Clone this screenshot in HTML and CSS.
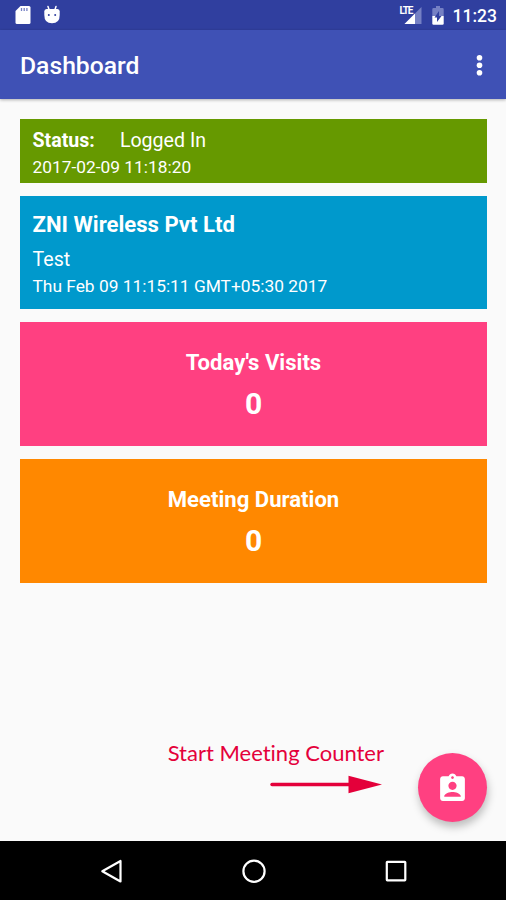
FILE: index.html
```html
<!DOCTYPE html>
<html lang="en">
<head>
    <meta charset="UTF-8">
    <meta name="viewport" content="width=device-width, initial-scale=1.0">
    <title>Dashboard</title>
    <link rel="stylesheet" href="styles.css">
</head>
<body>

<div class="status-bar">
    <div class="status-left">
        <svg width="18" height="20" viewBox="0 0 18 20">
            <path fill="#fff" d="M6.500 1H15q1.500 0 1.500 1.500V17.500q0 1.500-1.500 1.500H3q-1.500 0-1.500-1.500V6z"/>
            <path stroke="#7580c4" stroke-width="1.300" d="M7.500 3v3M10.200 3v3M12.900 3v3"/>
        </svg>
        <svg width="18" height="20" viewBox="0 0 18 20">
            <path stroke="#fff" stroke-width="1.500" stroke-linecap="round" d="M5 1.500l1 3M13 1.500l-1 3"/>
            <path fill="#fff" d="M1.300 10V6.500Q1.300 4 3.500 4H14.500q2.200 0 2.200 2.500V10q0 8.300-7.700 8.300T1.300 10z"/>
            <circle cx="5.800" cy="10" r="1" fill="#303f9f"/>
            <circle cx="12.200" cy="10" r="1" fill="#303f9f"/>
        </svg>
    </div>
    <div class="status-right">
        <div class="signal">
            <span class="lte">LTE</span>
            <svg width="19" height="18" viewBox="0 0 19 18">
                <path fill="#7580c4" d="M18.500 1v17H1.500z"/>
                <path fill="#fff" d="M12 7.500V18H1.500z"/>
            </svg>
        </div>
        <svg class="battery" width="12" height="19" viewBox="0 0 12 19">
            <path fill="#7580c4" d="M4 0h4v2h2.500q1.200 0 1.200 1.200V10H.3V3.200Q.3 2 1.500 2H4z"/>
            <path fill="#fff" d="M.3 10h11.400v7.500q0 1.200-1.200 1.200h-9Q.3 18.700.3 17.500z"/>
            <path fill="#303f9f" d="M7 5v5h2.500L5 16v-4.500H2.500z"/>
        </svg>
        <span class="clock">11:23</span>
    </div>
</div>

<header class="app-bar">
    <h1>Dashboard</h1>
    <svg class="more" width="8" height="24" viewBox="0 0 8 24">
        <circle cx="3.500" cy="4.700" r="2.800"/>
        <circle cx="3.500" cy="12.200" r="2.800"/>
        <circle cx="3.500" cy="19.700" r="2.800"/>
    </svg>
</header>

<main class="content">
    <section class="card card-status">
        <div class="status-row"><b>Status:</b><span>Logged In</span></div>
        <div class="date">2017-02-09 11:18:20</div>
    </section>

    <section class="card card-company">
        <h2>ZNI Wireless Pvt Ltd</h2>
        <div class="purpose">Test</div>
        <div class="date">Thu Feb 09 11:15:11 GMT+05:30 2017</div>
    </section>

    <section class="card card-count visits">
        <h2>Today's Visits</h2>
        <div class="count">0</div>
    </section>

    <section class="card card-count duration">
        <h2>Meeting Duration</h2>
        <div class="count">0</div>
    </section>
</main>

<div class="actions">
    <div class="hint">
        <span>Start Meeting Counter</span>
        <svg width="114" height="20" viewBox="0 0 114 20">
            <path stroke="#e4003a" stroke-width="3.400" stroke-linecap="round" d="M2 10.500h80"/>
            <path fill="#e4003a" d="M78.500 1.800L112 10.500 78.500 19.200z"/>
        </svg>
    </div>
    <button class="fab" aria-label="Start meeting">
        <svg width="33" height="33" viewBox="0 0 24 24">
            <path fill="#fff" d="M19 3h-4.180C14.400 1.840 13.300 1 12 1s-2.400.84-2.820 2H5c-1.100 0-2 .9-2 2v14c0 1.100.9 2 2 2h14c1.100 0 2-.9 2-2V5c0-1.100-.9-2-2-2zm-7 0c.55 0 1 .45 1 1s-.45 1-1 1-1-.45-1-1 .45-1 1-1zm0 4c1.660 0 3 1.340 3 3s-1.340 3-3 3-3-1.340-3-3 1.340-3 3-3zm6 11H6v-.4c0-2 4-3.100 6-3.100s6 1.100 6 3.100V18z"/>
        </svg>
    </button>
</div>

<nav class="nav-bar">
    <svg width="24" height="26" viewBox="0 0 24 26"><path d="M21.500 3v20.500L3.300 13.200z"/></svg>
    <svg width="26" height="26" viewBox="0 0 26 26"><circle cx="13" cy="13.300" r="10.600"/></svg>
    <svg width="24" height="26" viewBox="0 0 24 26"><rect x="2.800" y="3.800" width="18.500" height="18.500" rx=".5"/></svg>
</nav>

</body>
</html>
```
FILE: styles.css
```css
* {
    box-sizing: border-box;
}

body {
    margin: 0;
    height: 900px;
    display: flex;
    flex-direction: column;
    font-family: Roboto, sans-serif;
    color: #fff;
    background-color: #fafafa;
    overflow: hidden;
}

h1, h2 {
    margin: 0;
}

svg {
    display: block;
    fill: none;
    flex: none;
}

/* Android status bar */
.status-bar {
    height: 30px;
    display: flex;
    justify-content: space-between;
    padding: 5px 9px 0 14px;
    background-color: #303f9f;
}

.status-left {
    display: flex;
    gap: 11px;
}

.status-right {
    display: flex;
}

.signal {
    position: relative;
    padding: 1px 0 0 4px;
}

.lte {
    position: absolute;
    left: 1px;
    top: 1px;
    font-size: 10px;
    line-height: 10px;
    font-weight: 700;
    letter-spacing: -1.2px;
}

.battery {
    margin: 1px 9px 0 10px;
}

.clock {
    font-size: 17.500px;
    line-height: 22px;
    font-weight: 500;
}

.app-bar {
    height: 69px;
    display: flex;
    align-items: center;
    justify-content: space-between;
    padding: 2px 22px 0 20px;
    background-color: #3f51b5;
    box-shadow: 0 1px 3px rgba(0, 0, 0, 0.3);
}

.app-bar h1 {
    font-size: 24.700px;
    font-weight: 500;
}

.more {
    fill: #fff;
    margin-top: -2px;
}

.content {
    padding: 20px 19px 0 20px;
    display: flex;
    flex-direction: column;
    gap: 13px;
}

.card {
    padding: 0 12px 0 12.500px;
}

.card-status {
    height: 64px;
    padding-top: 9px;
    background-color: #669900;
}

.status-row {
    display: flex;
    gap: 25px;
    font-size: 19.600px;
    line-height: 26px;
}

.date {
    font-size: 17.350px;
    line-height: 27px;
}

.card-company {
    height: 113px;
    padding-top: 12px;
    background-color: #0099cc;
}

.card h2 {
    font-size: 22.100px;
    line-height: 32px;
    font-weight: 700;
}

.purpose {
    font-size: 19.600px;
    line-height: 26px;
    margin-top: 7px;
}

.card-count {
    height: 124px;
    padding: 24px 12px 0;
    text-align: center;
}

.visits {
    background-color: #ff4081;
}

.duration {
    background-color: #ff8800;
}

.count {
    font-size: 30px;
    line-height: 36px;
    font-weight: 700;
    margin-top: 8px;
}

.actions {
    margin-top: auto;
    height: 88px;
    display: flex;
    justify-content: flex-end;
    gap: 34px;
    padding-right: 19px;
}

.hint {
    display: flex;
    flex-direction: column;
    align-items: flex-end;
    margin-top: -14px;
    font-family: Lato, sans-serif;
    font-size: 22px;
    line-height: 28px;
    font-variant-ligatures: none;
    color: #e4003a;
}

.hint svg {
    margin-top: 7px;
}

.fab {
    width: 69px;
    height: 69px;
    display: flex;
    align-items: center;
    justify-content: center;
    padding: 2px 0 0;
    border: none;
    border-radius: 50%;
    background-color: #ff4081;
    box-shadow: 1px 5px 8px rgba(0, 0, 0, 0.25);
}

/* Android navigation buttons */
.nav-bar {
    height: 59px;
    display: flex;
    justify-content: space-between;
    padding: 17px 98px 0 99px;
    background-color: #000;
    stroke: #fff;
    stroke-width: 2.200;
    stroke-linejoin: round;
}
```
